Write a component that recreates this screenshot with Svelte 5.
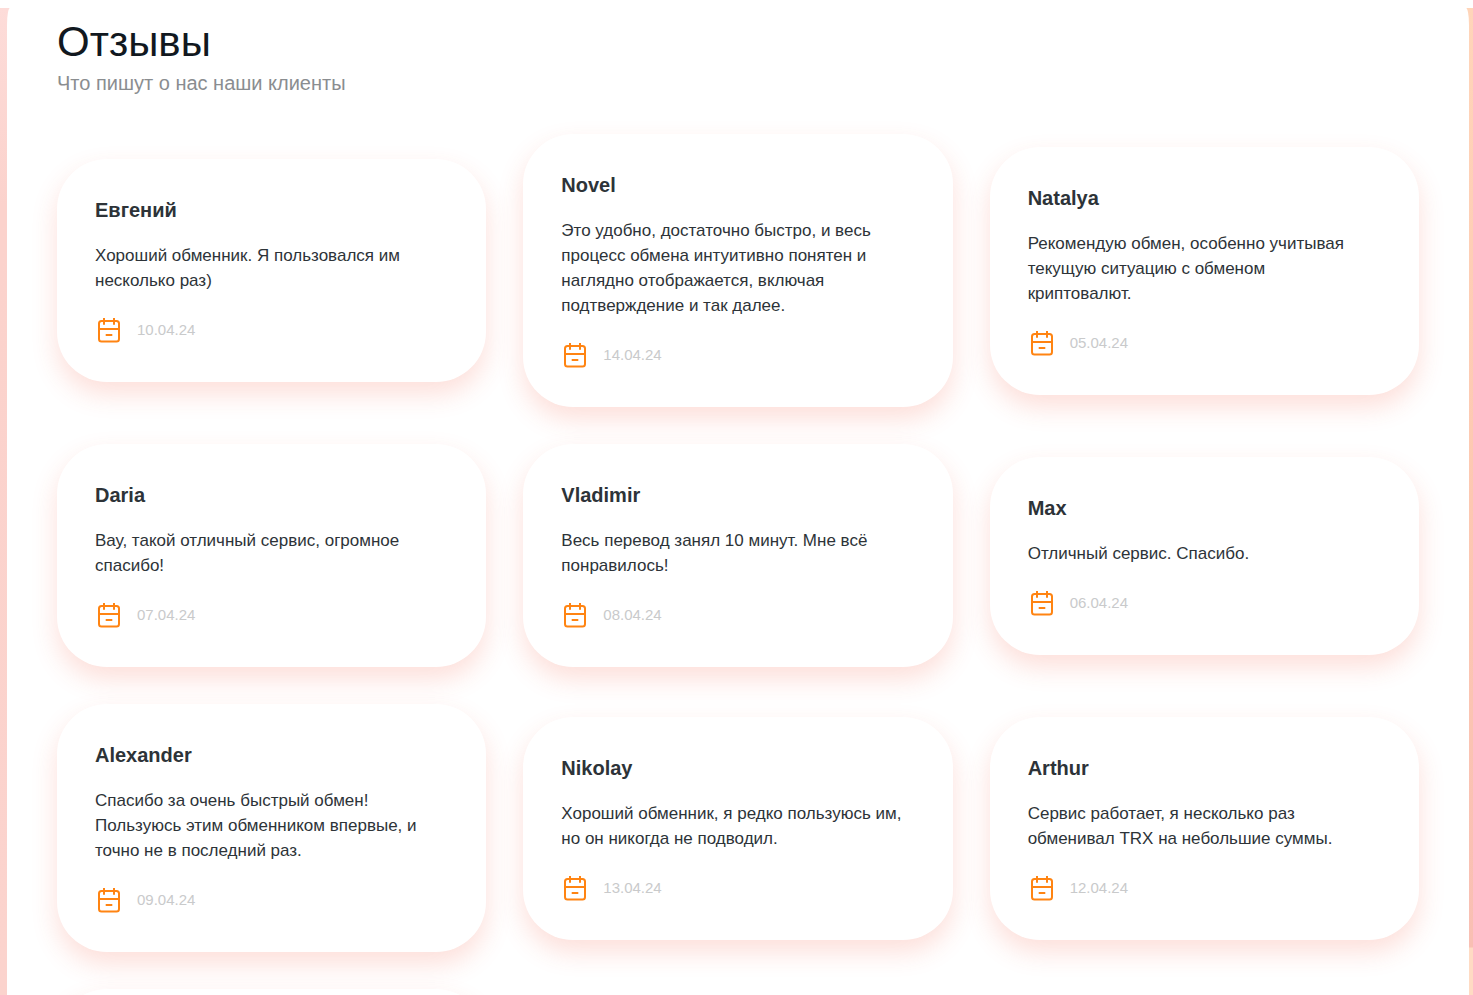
<script>
  const reviews = [
    { name: 'Евгений', text: 'Хороший обменник. Я пользовался им несколько раз)', date: '10.04.24' },
    { name: 'Novel', text: 'Это удобно, достаточно быстро, и весь процесс обмена интуитивно понятен и наглядно отображается, включая подтверждение и так далее.', date: '14.04.24' },
    { name: 'Natalya', text: 'Рекомендую обмен, особенно учитывая текущую ситуацию с обменом криптовалют.', date: '05.04.24' },
    { name: 'Daria', text: 'Вау, такой отличный сервис, огромное спасибо!', date: '07.04.24' },
    { name: 'Vladimir', text: 'Весь перевод занял 10 минут. Мне всё понравилось!', date: '08.04.24' },
    { name: 'Max', text: 'Отличный сервис. Спасибо.', date: '06.04.24' },
    { name: 'Alexander', text: 'Спасибо за очень быстрый обмен! Пользуюсь этим обменником впервые, и точно не в последний раз.', date: '09.04.24' },
    { name: 'Nikolay', text: 'Хороший обменник, я редко пользуюсь им, но он никогда не подводил.', date: '13.04.24' },
    { name: 'Arthur', text: 'Сервис работает, я несколько раз обменивал TRX на небольшие суммы.', date: '12.04.24' }
  ];
</script>

<div class="page">
  <main class="panel">
    <header>
      <h1>Отзывы</h1>
      <p class="subtitle">Что пишут о нас наши клиенты</p>
    </header>

    <section class="reviews">
      {#each reviews as review}
        <article class="card">
          <h2>{review.name}</h2>
          <p class="text">{review.text}</p>
          <div class="date">
            <svg width="28" height="28" viewBox="0 0 28 28" fill="none" stroke="#ff8412" stroke-width="2" aria-hidden="true">
              <rect x="4" y="5" width="20" height="20.5" rx="2.5" />
              <path d="M4 13H24M9 2V8.7M19 2V8.7M10.7 19H17.3" />
            </svg>
            <time>{review.date}</time>
          </div>
        </article>
      {/each}
      <article class="card next"></article>
    </section>
  </main>
</div>

<style>
  :global(body) {
    margin: 0;
    background: #fff;
  }

  .page {
    box-sizing: border-box;
    height: 100vh;
    overflow: hidden;
    padding: 0 4px 0 7px;
    border-top: 8px solid #fff;
    font-family: "Liberation Sans", Arial, sans-serif;
    background:
      linear-gradient(#fddcd9, #fbd2cc 20%, #fbd3cd) left / 50% 100% no-repeat,
      linear-gradient(#ffd5b9, #fdc8b1 50%, #f9bfb3 939px, #ffdbc3 940px) right / 50% 100% no-repeat;
  }

  .panel {
    min-height: 100%;
    box-sizing: border-box;
    padding: 8px 50px 0;
    background: #fff;
    border-top-left-radius: 3px 17px;
    border-top-right-radius: 3px 17px;
  }

  h1 {
    margin: 0;
    font-size: 42px;
    line-height: 52px;
    font-weight: 400;
    color: #111820;
  }

  .subtitle {
    margin: 0;
    font-size: 20px;
    line-height: 30px;
    color: #8a8d90;
  }

  .reviews {
    display: grid;
    grid-template-columns: repeat(3, 1fr);
    gap: 37px;
    align-items: center;
    margin-top: 36px;
  }

  .card {
    box-sizing: border-box;
    padding: 38px 48px 38px 38px;
    border-radius: 50px;
    background: #fff;
    box-shadow: 0 12px 26px rgba(242, 80, 50, 0.18);
  }

  .next {
    min-height: 223px;
  }

  h2 {
    margin: 0 0 20px;
    font-size: 20px;
    line-height: 26px;
    font-weight: 700;
    color: #2d3338;
  }

  .text {
    margin: 0 0 23px;
    font-size: 17px;
    line-height: 25px;
    color: #2d3338;
  }

  .date {
    display: flex;
    align-items: center;
    gap: 14px;
    font-size: 15px;
    line-height: 28px;
    color: #c9cacb;
  }
</style>
